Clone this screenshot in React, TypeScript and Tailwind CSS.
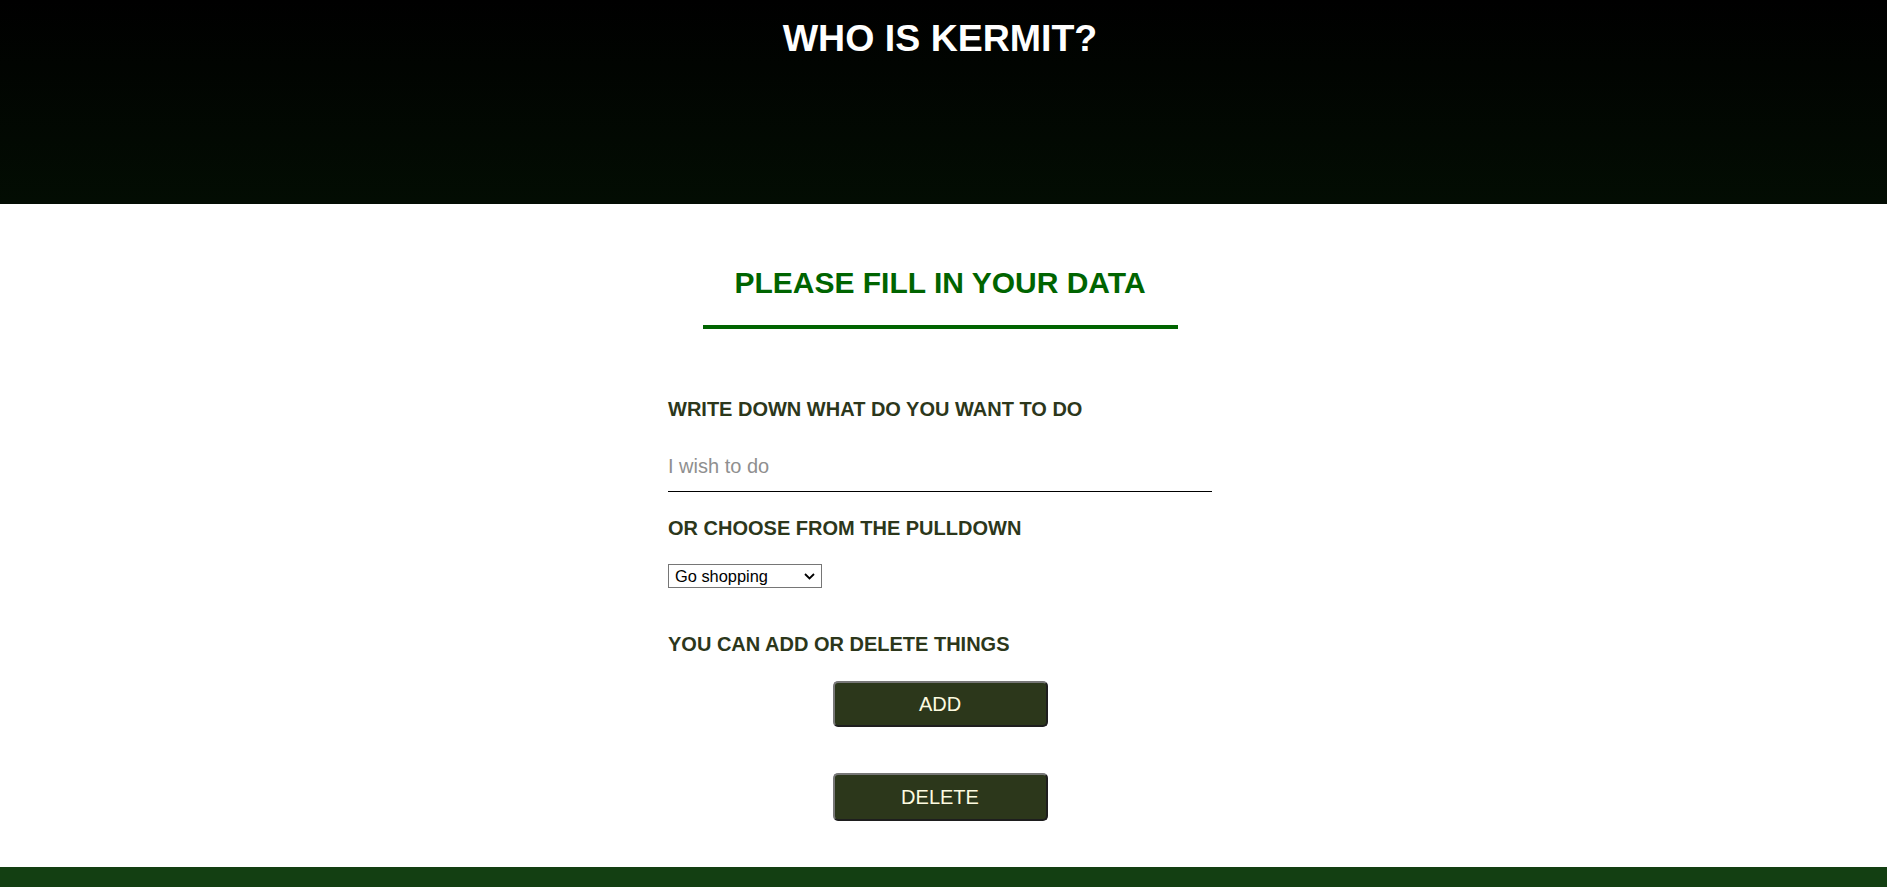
import { useState } from 'react';

const options = ['Go shopping', 'Clean the house', 'Walk the dog', 'Read a book'];

export default function App() {
  const [wish, setWish] = useState('');
  const [choice, setChoice] = useState(options[0]);

  return (
    <div className="min-h-screen bg-white font-['Liberation_Sans',Arial,sans-serif]">
      <header className="h-[204px] bg-[linear-gradient(to_bottom,#000000,#030d03)] pr-[7px]">
        <h1 className="pt-[16px] text-center text-[37.5px] leading-[44px] font-bold text-white">
          WHO IS KERMIT?
        </h1>
      </header>

      <main className="pr-[7px] pb-[46px]">
        <div className="mx-auto mt-[62px] w-[475px] border-b-4 border-[#006400] pb-[25px]">
          <h2 className="text-center text-[30px] leading-[34px] font-bold text-[#006400]">
            PLEASE FILL IN YOUR DATA
          </h2>
        </div>

        <form className="mx-auto mt-[69px] w-[544px]" onSubmit={(e) => e.preventDefault()}>
          <label htmlFor="wish" className="block text-[20px] leading-[22px] font-bold text-[#2c371b]">
            WRITE DOWN WHAT DO YOU WANT TO DO
          </label>
          <input
            id="wish"
            type="text"
            value={wish}
            onChange={(e) => setWish(e.target.value)}
            placeholder="I wish to do"
            className="mt-[31px] block w-full border-b border-black pt-[4px] pb-[14px] text-[20px] leading-[22px] text-black outline-none placeholder:text-[#8f8f8f]"
          />

          <label htmlFor="pick" className="mt-[25px] block text-[20px] leading-[22px] font-bold text-[#2c371b]">
            OR CHOOSE FROM THE PULLDOWN
          </label>
          <div className="relative mt-[25px] w-[154px]">
            <select
              id="pick"
              value={choice}
              onChange={(e) => setChoice(e.target.value)}
              className="block h-[24px] w-full appearance-none border border-[#767676] bg-white pl-[6px] text-[16.4px] leading-[20px] text-black"
            >
              {options.map((o) => (
                <option key={o} value={o}>{o}</option>
              ))}
            </select>
            <svg
              className="pointer-events-none absolute top-[9px] right-[7px]"
              width="11"
              height="7"
              viewBox="0 0 11 7"
              fill="none"
            >
              <path d="M1 1l4.5 4.5L10 1" stroke="#000" strokeWidth="1.8" />
            </svg>
          </div>

          <p className="mt-[45px] text-[20px] leading-[22px] font-bold text-[#2c371b]">
            YOU CAN ADD OR DELETE THINGS
          </p>

          <div className="mt-[26px] flex flex-col items-center gap-[46px]">
            <button
              type="button"
              className="h-[46px] w-[215px] rounded-[5px] border-2 border-t-[#777777] border-l-[#777777] border-r-[#1e1e1e] border-b-[#1e1e1e] bg-[#2c371b] text-[20px] text-[#fdfbe0]"
            >
              ADD
            </button>
            <button
              type="button"
              className="h-[48px] w-[215px] rounded-[5px] border-2 border-t-[#777777] border-l-[#777777] border-r-[#1e1e1e] border-b-[#1e1e1e] bg-[#2c371b] text-[20px] text-[#fdfbe0]"
            >
              DELETE
            </button>
          </div>
        </form>
      </main>

      <footer className="h-[40px] bg-[#133f12]" />
    </div>
  );
}
